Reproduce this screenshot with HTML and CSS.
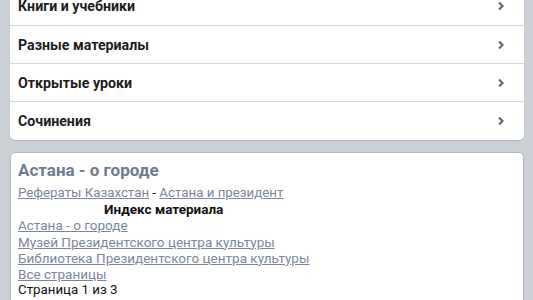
FILE: index.html
```html
<!DOCTYPE html>
<html lang="ru">
<head>
<meta charset="utf-8">
<link rel="stylesheet" href="styles.css">
</head>
<body>
<div class="page">
  <ul class="menu">
    <li class="menu-item"><span>Книги и учебники</span><svg class="chev" viewBox="0 0 8 10" width="8" height="10"><polyline points="2,1.5 5.5,5 2,8.5" /></svg></li>
    <li class="menu-item"><span>Разные материалы</span><svg class="chev" viewBox="0 0 8 10" width="8" height="10"><polyline points="2,1.5 5.5,5 2,8.5" /></svg></li>
    <li class="menu-item"><span>Открытые уроки</span><svg class="chev" viewBox="0 0 8 10" width="8" height="10"><polyline points="2,1.5 5.5,5 2,8.5" /></svg></li>
    <li class="menu-item"><span>Сочинения</span><svg class="chev" viewBox="0 0 8 10" width="8" height="10"><polyline points="2,1.5 5.5,5 2,8.5" /></svg></li>
  </ul>

  <div class="article">
    <h1 class="title">Астана - о городе</h1>
    <div class="crumbs"><a href="#">Рефераты Казахстан</a> - <a href="#">Астана и президент</a></div>
    <table class="index">
      <tr><th>Индекс материала</th></tr>
      <tr><td><a href="#">Астана - о городе</a></td></tr>
      <tr><td><a href="#">Музей Президентского центра культуры</a></td></tr>
      <tr><td><a href="#">Библиотека Президентского центра культуры</a></td></tr>
      <tr><td><a href="#">Все страницы</a></td></tr>
    </table>
    <div class="text">Страница 1 из 3</div>
    <div class="text">Столица страны долгое время находилась в бывшей</div>
  </div>
</div>
</body>
</html>
```

FILE: styles.css
```css
html, body {
  margin: 0;
  padding: 0;
}
body {
  background: #cbd0d7;
  font-family: Roboto, "Noto Sans", sans-serif;
  overflow: hidden;
}
.page {
  margin-top: -13px;
  padding: 0 9px 0 10px;
}
.menu {
  list-style: none;
  margin: 0;
  padding: 0;
  background: #fff;
  border-radius: 5px;
  box-shadow: 0 1px 1px rgba(0,0,0,0.12);
}
.menu-item {
  display: flex;
  align-items: center;
  justify-content: space-between;
  height: 37px;
  padding: 0 19px 0 8px;
  border-bottom: 1px solid #d5d8dc;
  font-size: 14.2px;
  font-weight: 700;
  color: #1c1c1c;
}
.menu-item:first-child {
  height: 38px;
}
.menu-item:last-child {
  border-bottom: none;
  height: 38px;
}
.chev {
  fill: none;
  stroke: #6a6a6a;
  stroke-width: 2.2;
}
.article {
  margin-top: 12px;
  background: #fff;
  border: 1px solid #b3b8bf;
  border-radius: 5px;
  padding: 7px 7px 20px;
}
.title {
  margin: 0 0 5px;
  font-size: 17px;
  line-height: 20px;
  font-weight: 700;
  color: #6e7a8e;
}
.crumbs, .text {
  font-size: 13.3px;
  line-height: 16.2px;
  color: #111;
}
.index {
  border-collapse: collapse;
  border-spacing: 0;
  font-size: 13.5px;
}
a {
  color: #7b869b;
  text-decoration: underline;
}
.index th, .index td {
  padding: 0;
  line-height: 16.2px;
}
.index th {
  text-align: center;
  font-weight: 700;
  color: #111;
}
.index td {
  text-align: left;
}
```
